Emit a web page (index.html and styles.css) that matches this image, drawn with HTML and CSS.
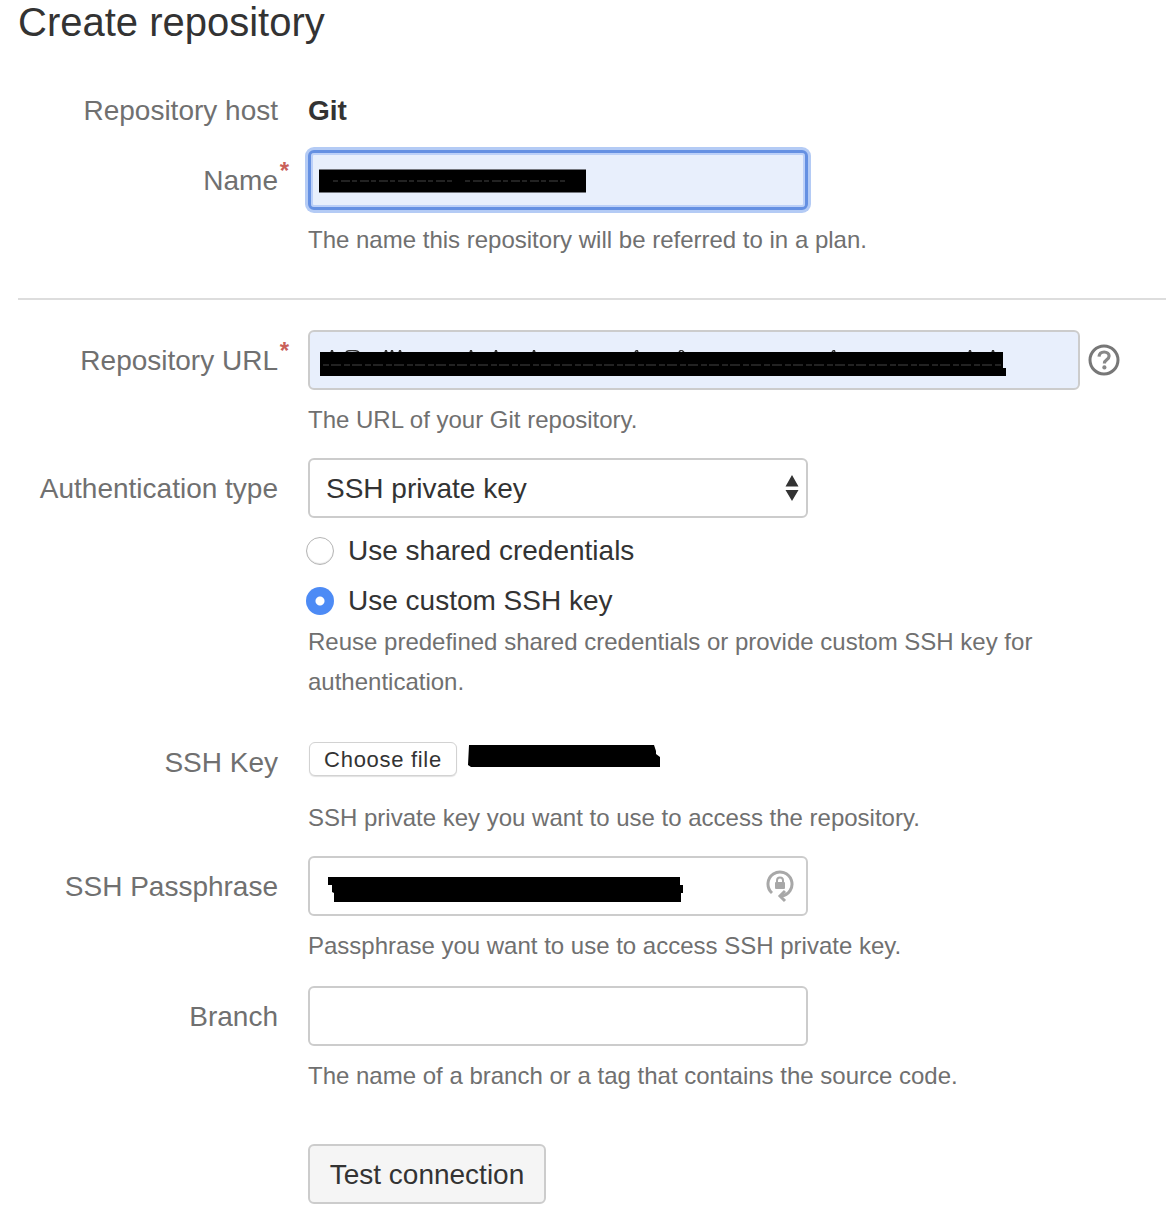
FILE: index.html
```html
<!DOCTYPE html>
<html lang="en">
<head>
<meta charset="utf-8">
<title>Create repository</title>
<link rel="stylesheet" href="styles.css">
</head>
<body>
<main class="page">
  <h1 class="title">Create repository</h1>
  <form class="form">
    <section class="group group-first">
      <div class="row row-static">
        <div class="label">Repository host</div>
        <div class="value">Git</div>
      </div>
      <div class="row row-name">
        <label class="label" for="name">Name<span class="req">*</span></label>
        <div class="control">
          <div class="field field-focus">
            <input id="name" class="input input-filled input-focus" type="text">
            <svg class="redact redact-name" width="268" height="24" viewBox="0 0 268 24"><rect x="0" y="0.5" width="267" height="23" fill="#000"/><path d="M14 12h120M146 12h100" stroke="#444" stroke-dasharray="5 3 9 2"/></svg>
          </div>
          <p class="help">The name this repository will be referred to in a plan.</p>
        </div>
      </div>
    </section>
    <hr class="divider">
    <section class="group">
      <div class="row">
        <label class="label" for="url">Repository URL<span class="req">*</span></label>
        <div class="control">
          <div class="input-line">
            <div class="field field-url">
              <input id="url" class="input input-filled input-url" type="text">
              <svg class="redact redact-url" width="690" height="28" viewBox="0 0 690 28"><path d="M12 2l1-2 1 2M27 2c2-2 10-2 13 0M66 2l1-2 1 2M72 2l1-2 1 2M80 2l1-2 1 2M151 2l1-2 1 2M176 2l1-2 1 2M214 2l1-2 1 2M316 2l2-2 1 2M360 2l2-2 3 2M513 2l2-2 1 2M650 2l1-2 1 2M673 2l1-2 1 2" stroke="#333" stroke-width="1.500" fill="none"/><path d="M1 2h683v16h3v8H1z" fill="#000"/><path d="M4 15h678" stroke="#444" stroke-dasharray="6 2 10 3"/></svg>
            </div>
            <svg class="help-icon" width="32" height="32" viewBox="0 0 32 32"><circle cx="16" cy="16" r="14" fill="none" stroke="#777" stroke-width="3"/><path d="M11 12.600c.3-3 2.500-4.600 5.200-4.600 2.900 0 4.900 1.700 4.900 4.100 0 1.800-1 2.800-2.500 3.800-1.500 1-2.200 1.700-2.200 3.500" fill="none" stroke="#888" stroke-width="3.200"/><circle cx="16.400" cy="23.400" r="2.100" fill="#888"/></svg>
          </div>
          <p class="help">The URL of your Git repository.</p>
        </div>
      </div>
      <div class="row row-auth">
        <label class="label" for="auth">Authentication type</label>
        <div class="control">
          <div class="field">
            <select id="auth" class="input select"><option>SSH private key</option></select>
            <svg class="select-arrows" width="14" height="26" viewBox="0 0 14 26"><path d="M7 0l6.500 11.500H.5zM.5 15h13L7 26z" fill="#333"/></svg>
          </div>
          <div class="radios">
            <label class="radio-row"><input class="radio" type="radio" name="cred"><span>Use shared credentials</span></label>
            <label class="radio-row"><input class="radio" type="radio" name="cred" checked><span>Use custom SSH key</span></label>
          </div>
          <p class="help">Reuse predefined shared credentials or provide custom SSH key for authentication.</p>
        </div>
      </div>
      <div class="row row-key">
        <div class="label">SSH Key</div>
        <div class="control">
          <div class="file-line">
            <button class="file-button" type="button">Choose file</button>
            <svg class="file-redact" width="192" height="26" viewBox="0 0 192 26"><path d="M1 2h185l2 6v3l4 3v10H3L0 22z" fill="#000"/></svg>
          </div>
          <p class="help help-key">SSH private key you want to use to access the repository.</p>
        </div>
      </div>
      <div class="row row-pass">
        <label class="label" for="pass">SSH Passphrase</label>
        <div class="control">
          <div class="field">
            <input id="pass" class="input" type="text">
            <svg class="redact redact-pass" width="358" height="28" viewBox="0 0 358 28"><path d="M1 1h352v8l3 0v8l-2 0v9H7v-9l-2-1V9H1z" fill="#000"/></svg>
            <svg class="lock-icon" width="28" height="36" viewBox="0 0 28 36"><path d="M6 26A12 12 0 1 1 15 29" fill="none" stroke="#a8a8a8" stroke-width="3"/><path d="M19 24l-5 5 5 5" fill="none" stroke="#a8a8a8" stroke-width="3"/><rect x="9" y="15" width="10" height="7" rx="1" fill="#a8a8a8"/><path d="M11 15.500v-2a3 3 0 0 1 6 0v2" fill="none" stroke="#a8a8a8" stroke-width="2"/></svg>
          </div>
          <p class="help">Passphrase you want to use to access SSH private key.</p>
        </div>
      </div>
      <div class="row">
        <label class="label" for="branch">Branch</label>
        <div class="control">
          <input id="branch" class="input" type="text">
          <p class="help">The name of a branch or a tag that contains the source code.</p>
        </div>
      </div>
      <div class="row row-actions">
        <div class="label"></div>
        <div class="control"><button class="button" type="button">Test connection</button></div>
      </div>
    </section>
  </form>
</main>
</body>
</html>
```
FILE: styles.css
```css
* { box-sizing: border-box; }
html, body { margin: 0; padding: 0; background: #fff; }
body { font-family: "Liberation Sans", Arial, sans-serif; color: #333; overflow: hidden; }
.page { padding: 0 10px 0 18px; }
.title { margin: -1px 0 0; font-size: 40px; line-height: 46px; font-weight: 400; color: #333; }
.form { margin: 0; }
.group-first { padding-top: 45px; }
.row { display: grid; grid-template-columns: 260px 1fr; column-gap: 30px; }
.label { position: relative; display: block; padding-top: 1px; text-align: right; font-size: 28px; line-height: 60px; color: #707070; }
.row-static .label, .value { line-height: 40px; }
.value { padding-top: 1px; font-size: 28px; font-weight: 700; color: #333; }
.row-static { height: 40px; }
.row-name { margin-top: 20px; }
.req { position: absolute; right: -11px; top: 1px; font-size: 24px; font-weight: 700; line-height: 40px; color: #c9605a; }
.control { min-width: 0; }
.field { position: relative; width: 500px; height: 60px; }
.input { display: block; width: 500px; height: 60px; margin: 0; padding: 2px 16px 0; background: #fff; border: 2px solid #ccc; border-radius: 6px; font: 28px/1 "Liberation Sans", Arial, sans-serif; color: #333; outline: 0; }
.input-filled { background: #e8effc; }
.input-focus { border-color: #6590e2; border-width: 3px; box-shadow: 0 0 0 3px #b4cbf5, inset 0 0 0 2px #bcd0f8; }
.input-line { display: flex; align-items: center; gap: 8px; }
.field-url, .input-url { width: 772px; }
.help-icon { display: block; }
.redact { position: absolute; }
.redact-name { left: 11px; top: 19px; }
.redact-url { left: 11px; top: 20px; }
.redact-pass { left: 19px; top: 20px; }
.lock-icon { position: absolute; right: 14px; top: 11px; }
.help { margin: 10px 0 0; font-size: 24px; line-height: 40px; color: #707070; }
.divider { height: 2px; margin: 38px 0 30px; border: 0; background: #ddd; }
.row-auth { margin-top: 18px; }
.select { appearance: none; -webkit-appearance: none; }
.select-arrows { position: absolute; right: 9px; top: 17px; }
.radios { margin-left: -2px; padding-top: 8px; }
.radio-row { display: flex; align-items: center; height: 50px; gap: 14px; font-size: 28px; color: #333; }
.radio { appearance: none; -webkit-appearance: none; flex: none; width: 28px; height: 28px; margin: 0; border-radius: 50%; border: 1px solid #b5b5b5; background: #fff; box-shadow: inset 0 -1px 1px #e4e4e4; }
.radio:checked { border: 0; box-shadow: none; background: radial-gradient(circle, #fff 0 4px, #4d8bf5 5px); }
.radios + .help { margin-top: -4px; }
.row-key { margin-top: 40px; }
.row-key .label { line-height: 40px; }
.file-line { display: flex; align-items: flex-start; gap: 11px; padding-left: 1px; height: 40px; }
.file-button { width: 148px; height: 34px; padding: 2px 0 0; background: #fff; border: 1px solid #d2d2d2; border-radius: 6px; box-shadow: 0 1px 1px #e2e2e2; font: 22px/1 "Liberation Sans", Arial, sans-serif; letter-spacing: 0.7px; color: #333; }
.file-redact { display: block; margin-top: 1px; }
.help-key { margin-top: 16px; }
.row-pass { margin-top: 18px; }
.row-pass + .row { margin-top: 20px; }
.row-actions { margin-top: 48px; }
.button { display: block; width: 238px; height: 60px; padding: 2px 0 0; background: #f5f5f5; border: 2px solid #ccc; border-radius: 6px; font: 28px/1 "Liberation Sans", Arial, sans-serif; color: #333; }
```
